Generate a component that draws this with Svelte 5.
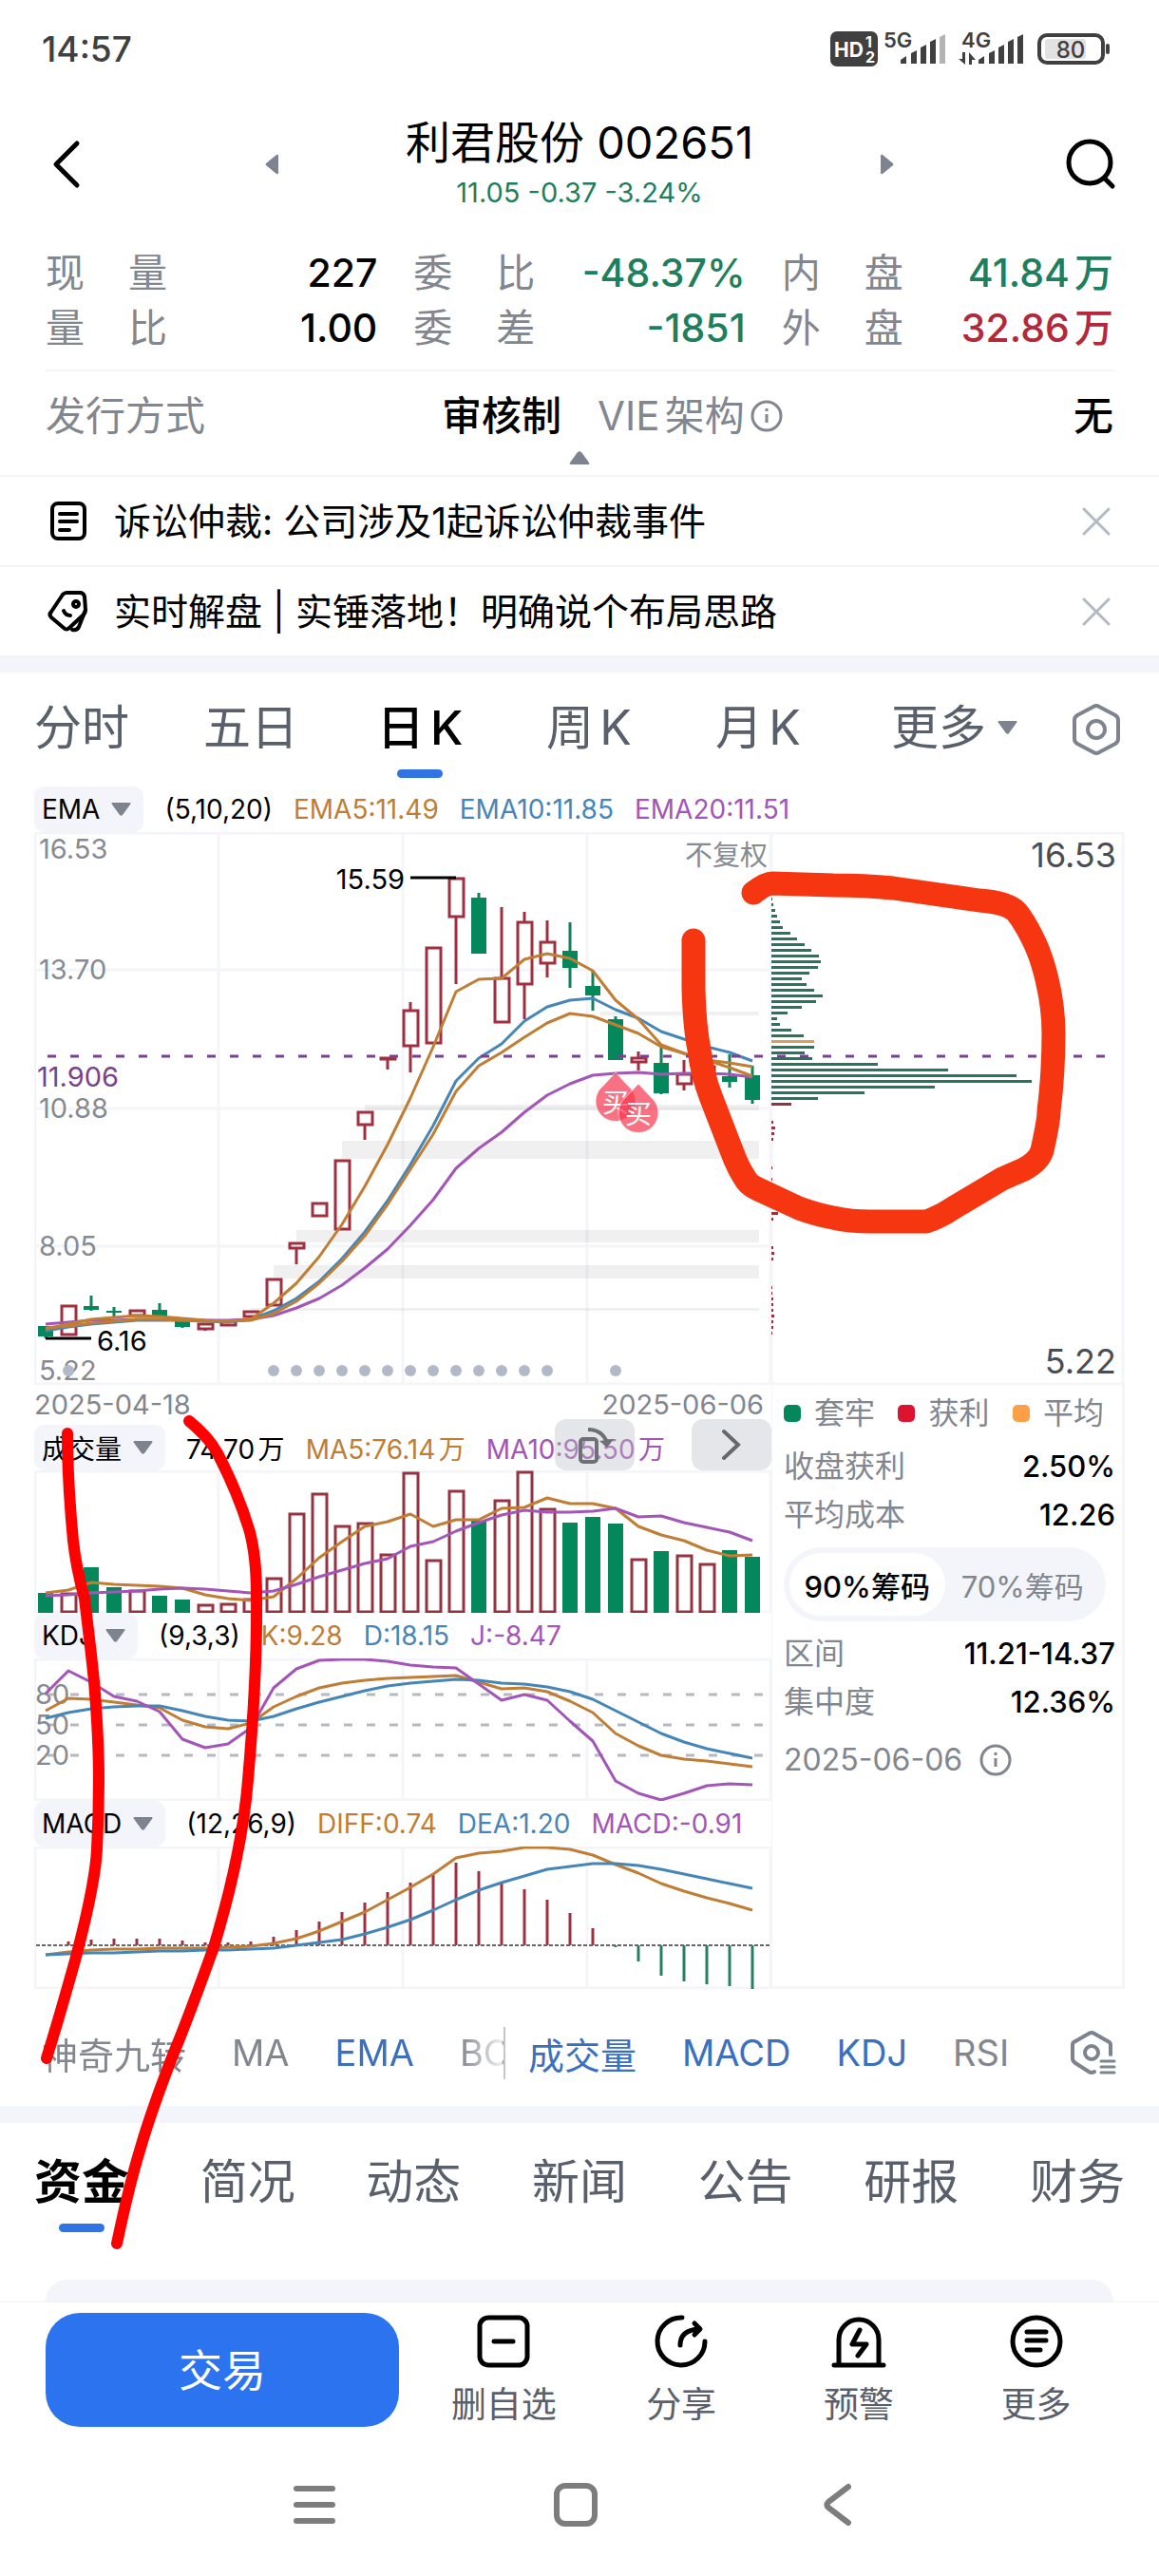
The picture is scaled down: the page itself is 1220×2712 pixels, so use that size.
<script lang="ts">
  type Candle = [high: number, top: number, bottom: number, low: number, up: boolean];

  const quotes = [
    { label: "现量", value: "227", tone: "" },
    { label: "委比", value: "-48.37%", tone: "down" },
    { label: "内盘", value: "41.84万", tone: "down" },
    { label: "量比", value: "1.00", tone: "" },
    { label: "委差", value: "-1851", tone: "down" },
    { label: "外盘", value: "32.86万", tone: "up" },
  ];

  const periods = ["分时", "五日", "日K", "周K", "月K"];
  const sections = ["资金", "简况", "动态", "新闻", "公告", "研报", "财务"];

  let period = $state("日K");
  let section = $state("资金");
  let chipRange = $state("90%筹码");
  let notices = $state([
    { icon: "doc", text: "诉讼仲裁: 公司涉及1起诉讼仲裁事件" },
    { icon: "tag", text: "实时解盘 | 实锤落地！明确说个布局思路" },
  ]);

  // chart coordinates: one slot per trading day, y grows downwards
  const x = (i: number) => 48 + i * 24;
  const line = (ys: number[]) => ys.map((y, i) => `${x(i)},${y}`).join(" ");

  const candles: Candle[] = [
    [1396, 1396, 1407, 1409, false],
    [1374, 1374, 1406, 1406, true],
    [1364, 1375, 1379, 1380, false],
    [1376, 1380, 1382, 1386, false],
    [1379, 1379, 1386, 1386, true],
    [1372, 1379, 1386, 1386, false],
    [1390, 1390, 1397, 1398, false],
    [1393, 1393, 1400, 1401, true],
    [1390, 1390, 1396, 1396, true],
    [1380, 1380, 1387, 1387, true],
    [1346, 1346, 1375, 1375, true],
    [1308, 1308, 1315, 1331, true],
    [1266, 1266, 1281, 1281, true],
    [1221, 1221, 1295, 1295, true],
    [1170, 1170, 1185, 1200, true],
    [1113, 1113, 1116, 1126, true],
    [1055, 1063, 1102, 1129, true],
    [997, 997, 1099, 1099, true],
    [924, 924, 966, 1036, true],
    [940, 945, 1004, 1004, false],
    [955, 1029, 1077, 1077, true],
    [960, 970, 1037, 1073, true],
    [969, 991, 1015, 1029, true],
    [971, 1001, 1019, 1040, false],
    [1022, 1038, 1048, 1064, false],
    [1070, 1073, 1116, 1116, false],
    [1107, 1113, 1119, 1127, true],
    [1101, 1119, 1151, 1152, false],
    [1116, 1130, 1142, 1148, true],
    [1114, 1122, 1136, 1140, true],
    [1110, 1133, 1139, 1145, false],
    [1122, 1132, 1158, 1162, false],
  ];

  const ema5 = [1399, 1394, 1389, 1387, 1385, 1386, 1388, 1390, 1391, 1389, 1372, 1351, 1323, 1289, 1249, 1205, 1156, 1102, 1044, 1031, 1030, 1010, 1004, 1009, 1022, 1053, 1073, 1100, 1109, 1116, 1124, 1133];
  const ema10 = [1401, 1397, 1394, 1392, 1390, 1390, 1390, 1391, 1392, 1389, 1380, 1367, 1349, 1325, 1297, 1264, 1226, 1185, 1138, 1114, 1099, 1075, 1060, 1053, 1051, 1063, 1072, 1086, 1094, 1102, 1108, 1117];
  const mid = [1398, 1396, 1393, 1391, 1389, 1389, 1390, 1391, 1391, 1390, 1383, 1370, 1351, 1328, 1301, 1268, 1231, 1194, 1149, 1122, 1108, 1092, 1077, 1067, 1070, 1079, 1088, 1102, 1109, 1116, 1119, 1123];
  const ema20 = [1394, 1392, 1390, 1390, 1389, 1389, 1389, 1390, 1390, 1389, 1385, 1377, 1367, 1353, 1335, 1315, 1290, 1263, 1230, 1209, 1192, 1171, 1153, 1141, 1132, 1130, 1129, 1131, 1130, 1130, 1131, 1134];

  const eventDots = [1, 10, 11, 12, 13, 14, 15, 16, 17, 18, 19, 20, 21, 22, 25];

  const gaps = [
    { x: 632, y: 1065, h: 4 },
    { x: 384, y: 1163, h: 6 },
    { x: 360, y: 1201, h: 19 },
    { x: 312, y: 1295, h: 13 },
    { x: 288, y: 1332, h: 14 },
    { x: 264, y: 1377, h: 3 },
  ];

  const chips = [1, 2, 4, 6, 9, 12, 20, 27, 35, 42, 50, 52, 49, 40, 32, 37, 45, 54, 47, 32, 17, 6, 9, 21, 34, 45, 45, 35, 43, 112, 186, 258, 274, 172, 98, 49, 21];
  const averageChip = 25;
  const profitChips = [
    [1180, 2], [1186, 4], [1192, 3], [1198, 2], [1228, 1], [1240, 1], [1276, 7], [1282, 2],
    [1312, 2], [1318, 3], [1324, 2], [1354, 1], [1360, 1], [1366, 2], [1372, 2], [1378, 2],
    [1384, 3], [1390, 2], [1396, 2], [1402, 1],
  ];

  const volumes = [1677, 1677, 1650, 1671, 1674, 1680, 1684, 1689, 1688, 1683, 1661, 1593, 1572, 1606, 1603, 1636, 1550, 1642, 1569, 1601, 1579, 1549, 1588, 1603, 1597, 1604, 1641, 1633, 1637, 1646, 1632, 1639];
  const volMa5 = [1677, 1674, 1666, 1668, 1669, 1670, 1672, 1679, 1683, 1685, 1681, 1662, 1640, 1623, 1607, 1602, 1594, 1607, 1600, 1600, 1588, 1587, 1577, 1583, 1583, 1588, 1607, 1616, 1622, 1632, 1638, 1637];
  const volMa10 = [1680, 1679, 1677, 1676, 1675, 1673, 1672, 1673, 1675, 1677, 1675, 1668, 1660, 1653, 1646, 1641, 1628, 1623, 1612, 1603, 1595, 1590, 1592, 1592, 1591, 1588, 1597, 1596, 1603, 1608, 1613, 1622];

  const kLine = [1801, 1788, 1789, 1792, 1795, 1798, 1811, 1818, 1820, 1814, 1797, 1786, 1777, 1772, 1769, 1767, 1766, 1765, 1764, 1771, 1778, 1777, 1781, 1791, 1803, 1825, 1838, 1848, 1852, 1854, 1857, 1860];
  const dLine = [1809, 1803, 1799, 1797, 1796, 1796, 1801, 1807, 1811, 1812, 1807, 1799, 1792, 1786, 1780, 1775, 1772, 1770, 1768, 1769, 1772, 1773, 1776, 1781, 1789, 1801, 1813, 1825, 1834, 1841, 1846, 1851];
  const jLine = [1783, 1759, 1771, 1786, 1791, 1802, 1831, 1840, 1836, 1819, 1777, 1757, 1748, 1747, 1747, 1749, 1753, 1755, 1756, 1773, 1790, 1784, 1790, 1812, 1833, 1875, 1888, 1895, 1888, 1880, 1878, 1879];

  const diff = [2058, 2055, 2053, 2052, 2052, 2051, 2051, 2051, 2050, 2049, 2046, 2041, 2033, 2023, 2013, 2000, 1987, 1973, 1956, 1951, 1949, 1945, 1945, 1947, 1953, 1963, 1972, 1983, 1991, 1998, 2004, 2011];
  const dea = [2058, 2057, 2056, 2056, 2055, 2054, 2054, 2053, 2053, 2052, 2051, 2048, 2045, 2042, 2036, 2029, 2021, 2011, 2000, 1990, 1982, 1975, 1968, 1965, 1962, 1962, 1964, 1968, 1973, 1978, 1983, 1988];
  const macd = [2048, 2044, 2042, 2041, 2041, 2041, 2043, 2045, 2045, 2044, 2039, 2032, 2023, 2013, 2003, 1992, 1982, 1973, 1961, 1970, 1982, 1989, 2000, 2014, 2030, 2050, 2065, 2080, 2086, 2089, 2091, 2094];
  const macdZero = 2048;
</script>

{#snippet paneGrid(top: number, height: number)}
  <g class="grid">
    <rect x="37" y={top + 1} width="774" height={height - 2} />
    {#each [230, 424, 618] as gx}
      <line x1={gx} x2={gx} y1={top} y2={top + height} />
    {/each}
  </g>
{/snippet}

{#snippet caret()}
  <svg class="caret" viewBox="0 0 21 14" aria-hidden="true"><path d="M1 0h19q1 1 0 2l-8 11q-1.500 1.500-3 0L1 2Q0 1 1 0z" /></svg>
{/snippet}

{#snippet info()}
  <svg class="info" viewBox="0 0 34 34" aria-hidden="true">
    <circle cx="17" cy="17" r="15" />
    <path d="M17 15v9M17 9v3" />
  </svg>
{/snippet}

<div class="page">
  <div class="status">
    <time>14:57</time>
    <svg viewBox="870 28 302 44" width="302" height="44" aria-hidden="true">
      <rect x="874" y="32" width="50" height="37" rx="7" fill="#404040" />
      <g font-weight="700" fill="#fff">
        <text x="878" y="59" font-size="21">HD</text>
        <text x="911" y="49" font-size="16">1</text>
        <text x="911" y="65" font-size="16">2</text>
      </g>
      <g font-weight="600" font-size="22" fill="#404040">
        <text x="930" y="49">5G</text>
        <text x="1012" y="49">4G</text>
      </g>
      <g fill="#404040">
        <path d="M948 66v-4l6-4v8zM959 66V55l6-3v14zM969 66V49l6-3v20zM979 66V43l6-3v26z" />
        <path d="M989 66V38l6-3v31z" fill="#b4b4b4" />
        <path d="M1030 66v-4l6-4v8zM1041 66V55l6-3v14zM1051 66V49l6-3v20zM1061 66V43l6-3v26zM1071 66V38l6-3v31z" />
        <path d="M1013 54h3v13l-7-6h4zM1020 67V54l7 8h-4v5z" />
      </g>
      <rect x="1094" y="36" width="67" height="29" rx="8" fill="none" stroke="#404040" stroke-width="4" />
      <rect x="1100" y="40" width="43" height="21" rx="3" fill="#e2e2e2" />
      <rect x="1164" y="45" width="4" height="11" rx="2" fill="#404040" />
      <text x="1127" y="60" font-size="24" text-anchor="middle" fill="#404040">80</text>
    </svg>
  </div>

  <header>
    <button class="icon-btn" aria-label="返回">
      <svg viewBox="0 0 54 54" width="54" height="54"><path d="M37 5 15 27l22 22" fill="none" stroke="#000" stroke-width="5" stroke-linecap="round" stroke-linejoin="round" /></svg>
    </button>
    <div class="switcher">
      <button class="icon-btn" aria-label="上一只">
        <svg viewBox="0 0 14 22" width="14" height="22"><path d="M14 2v18q0 2-2 1L1 12q-1-1 0-2L12 1q2-1 2 1z" fill="#7d838f" /></svg>
      </button>
      <div class="title">
        <h1>利君股份 002651</h1>
        <p>11.05 -0.37 -3.24%</p>
      </div>
      <button class="icon-btn" aria-label="下一只">
        <svg viewBox="0 0 14 22" width="14" height="22"><path d="M0 2v18q0 2 2 1l11-9q1-1 0-2L2 1Q0 0 0 2z" fill="#7d838f" /></svg>
      </button>
    </div>
    <button class="icon-btn" aria-label="搜索">
      <svg viewBox="0 0 54 54" width="54" height="54"><g fill="none" stroke="#000" stroke-width="5" stroke-linecap="round"><circle cx="25" cy="25" r="22" /><path d="m41 42 8 8" /></g></svg>
    </button>
  </header>

  <dl class="quotes">
    {#each quotes as q}
      <div>
        <dt>{q.label}</dt>
        <dd class={q.tone}>{q.value}</dd>
      </div>
    {/each}
  </dl>

  <div class="profile">
    <dl>
      <div>
        <dt>发行方式</dt>
        <dd>审核制</dd>
      </div>
      <div>
        <dt>VIE架构{@render info()}</dt>
        <dd>无</dd>
      </div>
    </dl>
    <button class="collapse" aria-label="收起">
      <svg viewBox="0 0 22 14" width="22" height="14"><path d="M9 1q2-1.500 4 0l8 11q1 2-1 2H2q-2 0-1-2z" fill="#7d838f" /></svg>
    </button>
  </div>

  {#each notices as notice, i}
    <div class="notice">
      {#if notice.icon === "doc"}
        <svg viewBox="0 0 46 46" width="46" height="46" class="stroke-icon"><rect x="7" y="4" width="34" height="37" rx="6" /><path d="M15 15h18M15 23h18M15 32h10" /></svg>
      {:else}
        <svg viewBox="0 0 46 46" width="46" height="46" class="stroke-icon"><path d="M22 3h14q4 0 5 4l1 14q0 3-2 5L25 40q-3 3-6 0L6 29q-3-3 0-6L18 5q2-2 4-2z" /><path d="M42 21 35 39q-2 4-7 3" /><circle cx="32" cy="15" r="3" /><path d="M19 22q2 5 7 5" /></svg>
      {/if}
      <span>{notice.text}</span>
      <button class="icon-btn" aria-label="关闭" onclick={() => notices.splice(i, 1)}>
        <svg viewBox="0 0 32 32" width="32" height="32"><path d="m3 3 26 26M29 3 3 29" fill="none" stroke="#b3bac4" stroke-width="3" stroke-linecap="round" /></svg>
      </button>
    </div>
  {/each}

  <div class="band"></div>

  <nav class="periods">
    {#each periods as p}
      <button class="tab" class:active={period === p} onclick={() => (period = p)}>{p}</button>
    {/each}
    <button class="tab more">更多{@render caret()}</button>
    <button class="icon-btn settings" aria-label="图表设置">
      <svg viewBox="0 0 52 56" width="52" height="56"><g fill="none" stroke="#7d838f" stroke-width="4" stroke-linejoin="round"><path d="M23 4q3-2 6 0l17 9q3 2 3 5v20q0 3-3 5l-17 9q-3 2-6 0L6 43q-3-2-3-5V18q0-3 3-5z" /><circle cx="26" cy="28" r="9" /></g></svg>
    </button>
  </nav>

  <main>
    <div class="pane-head">
      <button class="picker">EMA{@render caret()}</button>
      <span>(5,10,20)</span>
      <span class="c1">EMA5:11.49</span>
      <span class="c2">EMA10:11.85</span>
      <span class="c3">EMA20:11.51</span>
    </div>

    <svg class="chart" viewBox="36 876 1148 582" role="img" aria-label="日K线与筹码分布">
      {@render paneGrid(876, 582)}
      <g class="grid">
        {#each [1021, 1167, 1312] as gy}
          <line x1="37" x2="811" y1={gy} y2={gy} />
        {/each}
        <rect x="812" y="877" width="370" height="580" />
      </g>
      {#each gaps as g}
        <rect x={g.x} y={g.y} width={799 - g.x} height={g.h} fill="#000" opacity="0.060" />
      {/each}

      <g class="axis">
        <text x="41" y="904">16.53</text>
        <text x="41" y="1031">13.70</text>
        <text x="41" y="1177">10.88</text>
        <text x="41" y="1322">8.05</text>
        <text x="41" y="1453">5.22</text>
        <text x="808" y="911" text-anchor="end">不复权</text>
      </g>

      {#each candles as [high, top, bottom, low, up], i}
        {#if up}
          <g fill="none" stroke="#a12f40" stroke-width="3">
            <path d="M{x(i)} {high}V{top}M{x(i)} {bottom}V{low}" />
            <rect x={x(i) - 7} y={top + 1} width="15" height={Math.max(bottom - top - 2, 1)} />
          </g>
        {:else}
          <path d="M{x(i)} {high}V{low}" stroke="#12805a" stroke-width="3" />
          <rect x={x(i) - 8} y={top} width="16" height={bottom - top} fill="#05875c" />
        {/if}
      {/each}

      <polyline class="l3" points={line(ema20)} />
      <polyline class="l2" points={line(ema10)} />
      <polyline class="l1" points={line(mid)} />
      <polyline class="l1" points={line(ema5)} />

      {#each chips as w, i}
        <rect x="812" y={945 + i * 6} width={w} height="3" fill={i === averageChip ? "#d3a25c" : i > 35 ? "#963341" : "#27745f"} />
      {/each}
      {#each profitChips as [y, w]}
        <rect x="812" {y} width={w} height="3" fill="#963341" />
      {/each}

      <path d="M50 1112H1172" stroke="#78428f" stroke-width="3" stroke-dasharray="9 15" />
      <text x="39" y="1144" class="cost">11.906</text>

      <path d="M432 924h48M48 1409h48" stroke="#000" stroke-width="3" />
      <g class="mark">
        <text x="426" y="936" text-anchor="end">15.59</text>
        <text x="102" y="1422">6.16</text>
      </g>

      {#each eventDots as i}
        <circle cx={x(i)} cy="1443" r="6" fill="#b3bac7" />
      {/each}

      {#each [[648, 1160], [672, 1172]] as [bx, by]}
        <path d="M{bx} {by - 31}l13 14a21 21 0 1 1-26 0z" fill="#f5364f" fill-opacity="0.700" stroke="#fff" stroke-opacity="0.600" />
        <text class="buy" x={bx} y={by + 11} text-anchor="middle">买</text>
      {/each}

      <g class="range" text-anchor="end">
        <text x="1175" y="913">16.53</text>
        <text x="1175" y="1446">5.22</text>
      </g>
    </svg>

    <div class="lower">
      <div class="panes">
        <div class="dates"><span>2025-04-18</span><span>2025-06-06</span></div>

        <div class="pane-head">
          <button class="picker">成交量{@render caret()}</button>
          <span>74.70万</span>
          <span class="c1">MA5:76.14万</span>
          <span class="c3">MA10:95.50万</span>
          <div class="float-btns">
            <button aria-label="横屏">
              <svg viewBox="0 0 44 44" width="44" height="44"><g fill="none" stroke="#6f7073" stroke-width="4"><rect x="7" y="16" width="17" height="24" rx="3" /><path d="M15 6q15 0 20 14" /></g><path d="m27 18 15-2-7 9z" fill="#6f7073" /></svg>
            </button>
            <button aria-label="下一页">
              <svg viewBox="0 0 44 44" width="44" height="44"><path d="m14 8 15 14-15 14" fill="none" stroke="#66686c" stroke-width="4" stroke-linecap="round" /></svg>
            </button>
          </div>
        </div>
        <svg class="chart" viewBox="36 1548 776 150" role="img" aria-label="成交量">
          {@render paneGrid(1548, 150)}
          {#each volumes as y, i}
            {#if candles[i][4]}
              <rect x={x(i) - 7} y={y + 1} width="15" height={1696 - y} fill="none" stroke="#963341" stroke-width="3" />
            {:else}
              <rect x={x(i) - 8} {y} width="16" height={1698 - y} fill="#05875c" />
            {/if}
          {/each}
          <polyline class="l1" points={line(volMa5)} />
          <polyline class="l3" points={line(volMa10)} />
        </svg>

        <div class="pane-head">
          <button class="picker">KDJ{@render caret()}</button>
          <span>(9,3,3)</span>
          <span class="c1">K:9.28</span>
          <span class="c2">D:18.15</span>
          <span class="c3">J:-8.47</span>
        </div>
        <svg class="chart" viewBox="36 1746 776 150" role="img" aria-label="KDJ">
          {@render paneGrid(1746, 150)}
          {#each [[80, 1784], [50, 1816], [20, 1848]] as [level, y]}
            <path d="M50 {y}H804" stroke="#b6b9bf" stroke-width="3" stroke-dasharray="9 15" />
            <text class="level" x="37" y={y + 10}>{level}</text>
          {/each}
          <polyline class="l1" points={line(kLine)} />
          <polyline class="l2" points={line(dLine)} />
          <polyline class="l3" points={line(jLine)} />
        </svg>

        <div class="pane-head">
          <button class="picker">MACD{@render caret()}</button>
          <span>(12,26,9)</span>
          <span class="c1">DIFF:0.74</span>
          <span class="c2">DEA:1.20</span>
          <span class="c3">MACD:-0.91</span>
        </div>
        <svg class="chart" viewBox="36 1944 776 150" role="img" aria-label="MACD">
          {@render paneGrid(1944, 150)}
          {#each macd as y, i}
            <path d="M{x(i)} {macdZero}V{y}" stroke={y > macdZero ? "#27805f" : "#a12f40"} stroke-width="3" />
          {/each}
          <path d="M38 2048H810" stroke="#6b6466" stroke-width="2" stroke-dasharray="4 2" />
          <polyline class="l1" points={line(diff)} />
          <polyline class="l2" points={line(dea)} />
        </svg>
      </div>

      <aside>
        <ul class="legend">
          <li><i class="trapped"></i>套牢</li>
          <li><i class="profit"></i>获利</li>
          <li><i class="average"></i>平均</li>
        </ul>
        <dl>
          <div><dt>收盘获利</dt><dd>2.50%</dd></div>
          <div><dt>平均成本</dt><dd>12.26</dd></div>
        </dl>
        <div class="segmented">
          {#each ["90%筹码", "70%筹码"] as r}
            <button class:on={chipRange === r} onclick={() => (chipRange = r)}>{r}</button>
          {/each}
        </div>
        <dl>
          <div><dt>区间</dt><dd>11.21-14.37</dd></div>
          <div><dt>集中度</dt><dd>12.36%</dd></div>
        </dl>
        <p class="as-of">2025-06-06 {@render info()}</p>
      </aside>
    </div>
  </main>

  <nav class="indicators">
    <div class="main-set">
      <button>神奇九转</button>
      <button>MA</button>
      <button class="on">EMA</button>
      <button>BO</button>
    </div>
    <div class="sub-set">
      <button class="on">成交量</button>
      <button class="on">MACD</button>
      <button class="on">KDJ</button>
      <button>RSI</button>
    </div>
    <button class="icon-btn" aria-label="指标设置">
      <svg viewBox="0 0 50 48" width="50" height="48"><g fill="none" stroke="#7d838f" stroke-width="4" stroke-linecap="round" stroke-linejoin="round"><path d="M43 26V16q0-3-3-4L26 4q-3-2-6 0L6 12q-3 1-3 4v14q0 3 3 5l14 9q3 2 6 0" /><circle cx="23" cy="24" r="7" /><path d="M33 33h14M33 39h14M33 45h14" stroke-width="3" /></g></svg>
    </button>
  </nav>

  <div class="band"></div>

  <nav class="sections">
    {#each sections as s}
      <button class="tab" class:active={section === s} onclick={() => (section = s)}>{s}</button>
    {/each}
  </nav>

  <div class="card"></div>

  <footer>
    <button class="trade">交易</button>
    <button class="tool">
      <svg viewBox="0 0 60 56"><rect x="5" y="3" width="50" height="50" rx="9" /><path d="M20 28h20" /></svg>
      删自选
    </button>
    <button class="tool">
      <svg viewBox="0 0 60 56"><path d="M31 3a25 25 0 1 0 24 25" /><path d="M29 32q0-16 20-17M44 9l6 6-6 6" /></svg>
      分享
    </button>
    <button class="tool">
      <svg viewBox="0 0 60 56"><path d="M9 52V26a21 21 0 0 1 42 0v26M4 53h52M31 16l-8 15h15l-9 12" /></svg>
      预警
    </button>
    <button class="tool">
      <svg viewBox="0 0 60 56"><circle cx="30" cy="28" r="25" /><path d="M20 18h20M20 27h20M20 37h14" /></svg>
      更多
    </button>
  </footer>

  <div class="system-nav">
    <button class="icon-btn" aria-label="最近任务"><svg viewBox="0 0 48 48" width="48" height="48"><path d="M5 7h38M5 24h38M5 41h38" /></svg></button>
    <button class="icon-btn" aria-label="主屏幕"><svg viewBox="0 0 48 48" width="48" height="48"><rect x="4" y="4" width="40" height="40" rx="9" /></svg></button>
    <button class="icon-btn" aria-label="返回上级"><svg viewBox="0 0 48 48" width="48" height="48"><path d="M36 5 15 21q-3 3 0 6l21 16" /></svg></button>
  </div>

  <!-- pen strokes drawn over the page -->
  <svg class="ink" viewBox="0 0 1220 2712" aria-hidden="true">
    <path
      stroke="#f63610"
      stroke-width="25"
      d="M730 990V1040Q731 1080 736 1105Q739 1130 748 1154L770 1211Q777 1230 784 1240Q787 1247 798 1252L841 1272Q860 1279 877 1282Q895 1286 916 1286H975Q990 1281 1003 1272L1055 1241L1078 1231Q1094 1222 1097 1211Q1104 1180 1104 1170Q1109 1130 1109 1088Q1109 1060 1102 1031Q1096 1005 1086 986Q1078 970 1070 960Q1060 950 1031 948L940 935Q910 932 877 932L813 930Q806 930 793 940"
    />
    <path
      stroke="#f00"
      stroke-width="12"
      d="M71 1509Q71 1560 77 1622Q80 1650 89 1683Q96 1740 99 1770Q104 1830 104 1874Q104 1910 102 1947Q100 1985 79 2064Q62 2125 49 2167M199 1496Q221 1514 230 1532Q252 1575 263 1613Q270 1640 270 1680Q271 1760 261 1874Q255 1950 225 2050Q198 2125 183 2161Q160 2220 148 2261Q136 2300 123 2362"
    />
  </svg>
</div>

<style>
  :global(body) {
    background: #fff;
  }

  .page {
    position: relative;
    font-family: Inter, "Noto Sans CJK SC", sans-serif;
    text-autospace: normal;
    color: #000;
    background: #fff;
    overflow: hidden;
  }

  .page :is(h1, p, dl, dd, ul) {
    margin: 0;
    padding: 0;
  }

  button {
    border: none;
    background: none;
    padding: 0;
    font: inherit;
    color: inherit;
    cursor: pointer;
    white-space: nowrap;
  }

  svg {
    display: block;
    flex: none;
  }

  .icon-btn {
    display: flex;
  }

  .status {
    display: flex;
    justify-content: space-between;
    align-items: center;
    height: 102px;
    padding: 0 48px 2px 44px;
    font-size: 37px;
    font-weight: 500;
    color: #404040;
  }

  header {
    display: flex;
    align-items: center;
    justify-content: space-between;
    height: 138px;
    padding: 0 44px 16px;

    & h1 {
      font-size: 47px;
      font-weight: 400;
      line-height: 60px;
    }

    & p {
      font-size: 29px;
      line-height: 46px;
      color: #1d7f5e;
    }
  }

  .switcher {
    display: flex;
    align-items: center;
    gap: 134px;
  }

  .title {
    text-align: center;
  }

  dt {
    color: #82868f;
  }

  .quotes {
    display: grid;
    grid-template-columns: repeat(3, 1fr);
    column-gap: 38px;
    border-bottom: 2px solid #f4f4f6;
    line-height: 58px;

    & div {
      display: flex;
      justify-content: space-between;
    }

    & dt {
      width: 128px;
      font-size: 41px;
      text-align: justify;
      text-align-last: justify;
    }

    & dd {
      font-size: 41px;
      font-weight: 500;
    }
  }

  .page .quotes {
    margin: 0 48px;
    padding-bottom: 15px;
  }

  .down {
    color: #1d7f5e;
  }

  .up {
    color: #b3283a;
  }

  .profile {
    padding: 10px 48px 11px;
    border-bottom: 2px solid #f4f4f6;

    & dl {
      display: grid;
      grid-template-columns: 1fr 1fr;
      column-gap: 38px;
      font-size: 42px;
      line-height: 74px;
    }

    & dl div {
      display: flex;
      justify-content: space-between;
    }

    & dt {
      display: flex;
      align-items: center;
      gap: 6px;
    }

    & dd {
      font-weight: 500;
    }
  }

  .collapse {
    display: block;
    margin: 0 auto;
  }

  .info {
    width: 34px;
    height: 34px;
    fill: none;
    stroke: #82868f;
    stroke-width: 3;
  }

  .notice {
    display: flex;
    align-items: center;
    gap: 26px;
    height: 93px;
    padding: 0 50px 0 48px;
    font-size: 39px;

    & span {
      flex: 1;
      padding-bottom: 6px;
      text-autospace: no-autospace;
    }
  }

  .notice + .notice {
    border-top: 2px solid #f4f4f6;
  }

  .stroke-icon {
    fill: none;
    stroke: #000;
    stroke-width: 4;
    stroke-linecap: round;
    stroke-linejoin: round;
  }

  .band {
    height: 18px;
    background: #f4f5fa;
  }

  .tab {
    display: flex;
    flex-direction: column;
    align-items: center;
    font-size: 50px;
    line-height: 60px;
    color: #5a5f6c;

    &.active {
      color: #000;
      font-weight: 500;
    }

    &.active::after {
      content: "";
      width: 48px;
      height: 9px;
      margin-top: 14px;
      border-radius: 5px;
      background: #2f73e4;
    }
  }

  .periods {
    display: flex;
    align-items: flex-start;
    gap: 78px;
    height: 92px;
    padding: 28px 40px 0 36px;

    & .tab {
      min-width: 100px;
    }

    & .more {
      flex-direction: row;
      gap: 12px;
      padding-left: 12px;
    }

    & .settings {
      margin-left: auto;
      padding-top: 4px;
    }
  }

  .caret {
    width: 21px;
    height: 14px;
    fill: #7d838f;
  }

  main {
    padding: 0 36px;
  }

  .pane-head {
    position: relative;
    display: flex;
    align-items: center;
    gap: 22px;
    height: 48px;
    font-size: 28px;
    white-space: nowrap;
  }

  .picker {
    display: flex;
    align-items: center;
    gap: 12px;
    height: 48px;
    padding: 0 13px 0 8px;
    border-radius: 10px;
    background: #f4f5fa;
  }

  .c1 {
    color: #c07d33;
  }

  .c2 {
    color: #4586b8;
  }

  .c3 {
    color: #a355b8;
  }

  .chart {
    width: 100%;
    height: auto;
  }

  .grid {
    fill: none;
    stroke: #f4f5f9;
    stroke-width: 3;
  }

  .l1,
  .l2,
  .l3 {
    fill: none;
    stroke-width: 3;
    stroke-linejoin: round;
  }

  .l1 {
    stroke: #c07d33;
  }

  .l2 {
    stroke: #4586b8;
  }

  .l3 {
    stroke: #a355b8;
  }

  .axis,
  .level {
    font-size: 29px;
    fill: #868a92;
  }

  .cost {
    font-size: 29px;
    fill: #78428f;
  }

  .mark {
    font-size: 29px;
  }

  .buy {
    font-size: 28px;
    fill: #fff;
  }

  .range {
    font-size: 36px;
    fill: #4a4d54;
  }

  .lower {
    display: grid;
    grid-template-columns: 776fr 372fr;
  }

  .dates {
    display: flex;
    justify-content: space-between;
    padding-right: 8px;
    font-size: 29px;
    line-height: 42px;
    color: #82868f;
  }

  .float-btns {
    position: absolute;
    right: 0;
    bottom: 0;
    display: flex;
    gap: 60px;

    & button {
      display: flex;
      align-items: center;
      justify-content: center;
      width: 84px;
      height: 54px;
      border-radius: 12px;
      background: rgb(190 192 200 / 40%);
    }
  }

  aside {
    padding: 0 7px 0 12px;
    border: solid #f4f5f9;
    border-width: 0 3px 3px 1px;
    font-size: 32px;

    & dl div {
      display: flex;
      justify-content: space-between;
      line-height: 51px;
    }

    & dd {
      font-size: 31px;
      font-weight: 500;
    }
  }

  .legend {
    display: flex;
    justify-content: space-between;
    list-style: none;
    line-height: 60px;
    color: #82868f;

    & li {
      display: flex;
      align-items: center;
      gap: 14px;
    }

    & i {
      width: 18px;
      height: 18px;
      border-radius: 5px;
    }
  }

  .page .legend {
    padding-right: 12px;
  }

  .trapped {
    background: #05875c;
  }

  .profit {
    background: #dd1430;
  }

  .average {
    background: #fba047;
  }

  .segmented {
    display: flex;
    margin: 9px 10px 8px 0;
    padding: 6px;
    border-radius: 39px;
    background: #f4f5fa;

    & button {
      flex: 1;
      height: 66px;
      border-radius: 33px;
      font-size: 31px;
      color: #82868f;
    }

    & .on {
      background: #fff;
      color: #000;
      font-weight: 500;
    }
  }

  .as-of {
    display: flex;
    align-items: center;
    gap: 18px;
    line-height: 72px;
    color: #82868f;
  }

  .indicators {
    display: flex;
    align-items: center;
    height: 112px;
    padding: 11px 44px 0;
    font-size: 38px;
    color: #82868f;

    & .on {
      color: #3a70bd;
    }

    & > .icon-btn {
      margin-left: auto;
    }
  }

  .main-set {
    display: flex;
    gap: 48px;
    width: 486px;
    overflow: hidden;
    border-right: 2px solid #c3c6cc;
    mask-image: linear-gradient(to right, #000 440px, rgb(0 0 0 / 15%) 484px, #000 486px);
  }

  .sub-set {
    display: flex;
    gap: 48px;
    padding-left: 24px;
  }

  .sections {
    display: flex;
    justify-content: space-between;
    height: 133px;
    padding: 32px 36px 0;

    & .active {
      font-weight: 700;
    }
  }

  .card {
    height: 23px;
    margin: 0 48px;
    border-radius: 24px 24px 0 0;
    background: #f4f5fa;
  }

  footer {
    display: flex;
    align-items: flex-start;
    padding: 11px 36px 0 48px;
    border-top: 1px solid #f0f1f3;
  }

  .trade {
    width: 372px;
    height: 120px;
    margin-right: 17px;
    padding-bottom: 6px;
    border-radius: 36px;
    background: #2c74ef;
    color: #fff;
    font-size: 46px;
  }

  .tool {
    flex: 1;
    display: flex;
    flex-direction: column;
    align-items: center;
    gap: 12px;
    padding-top: 2px;
    font-size: 37px;
    line-height: 54px;
    color: #5a5f6c;

    & svg {
      width: 60px;
      height: 56px;
      fill: none;
      stroke: #000;
      stroke-width: 5;
      stroke-linecap: round;
      stroke-linejoin: round;
    }
  }

  .system-nav {
    display: grid;
    grid-template-columns: repeat(3, 275px);
    justify-content: center;
    justify-items: center;
    padding: 54px 8px 49px 0;

    & svg {
      fill: none;
      stroke: #7d7d7d;
      stroke-width: 6;
      stroke-linecap: round;
    }
  }

  .ink {
    position: absolute;
    top: 0;
    left: 0;
    width: 100%;
    fill: none;
    stroke-linecap: round;
    stroke-linejoin: round;
    pointer-events: none;
  }
</style>
